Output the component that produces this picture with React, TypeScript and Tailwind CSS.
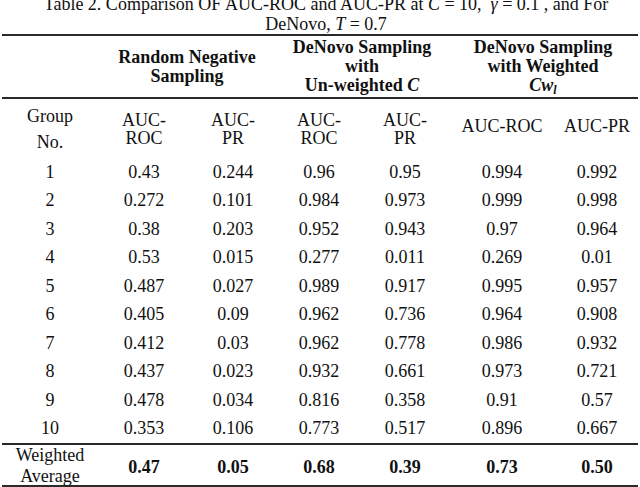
import React from "react";

const cols = "grid grid-cols-[96px_92px_86px_86px_86px_108px_82px]";

const data: string[][] = [
  ["1", "0.43", "0.244", "0.96", "0.95", "0.994", "0.992"],
  ["2", "0.272", "0.101", "0.984", "0.973", "0.999", "0.998"],
  ["3", "0.38", "0.203", "0.952", "0.943", "0.97", "0.964"],
  ["4", "0.53", "0.015", "0.277", "0.011", "0.269", "0.01"],
  ["5", "0.487", "0.027", "0.989", "0.917", "0.995", "0.957"],
  ["6", "0.405", "0.09", "0.962", "0.736", "0.964", "0.908"],
  ["7", "0.412", "0.03", "0.962", "0.778", "0.986", "0.932"],
  ["8", "0.437", "0.023", "0.932", "0.661", "0.973", "0.721"],
  ["9", "0.478", "0.034", "0.816", "0.358", "0.91", "0.57"],
  ["10", "0.353", "0.106", "0.773", "0.517", "0.896", "0.667"],
];

const avg = ["0.47", "0.05", "0.68", "0.39", "0.73", "0.50"];

function Rule() {
  return <div className="h-[2px] bg-[#2a2a2a]" />;
}

export default function App() {
  return (
    <div
      className="w-[640px] h-[487px] overflow-hidden bg-white text-[#111] text-[18px]"
      style={{ fontFamily: '"Liberation Serif", "Times New Roman", serif' }}
    >
      <div className="mt-[-6px] h-[40px] text-center leading-[20px] pl-[12px]">
        <div className="whitespace-nowrap">
          Table 2. Comparison OF AUC-ROC and AUC-PR at <i>C</i> = 10,&nbsp; <i>γ</i> = 0.1 , and For
        </div>
        <div className="whitespace-nowrap">
          DeNovo, <i>T</i> = 0.7
        </div>
      </div>
      <div className="mx-[2px]">
        <Rule />
        <div className="grid grid-cols-[96px_178px_172px_190px] h-[61px] items-center text-center font-bold leading-[19px]">
          <div />
          <div>
            <div>Random Negative</div>
            <div>Sampling</div>
          </div>
          <div>
            <div>DeNovo Sampling</div>
            <div>with</div>
            <div>
              Un-weighted <i>C</i>
            </div>
          </div>
          <div>
            <div>DeNovo Sampling</div>
            <div>with Weighted</div>
            <div>
              <i>Cw</i>
              <sub className="text-[12px] italic">l</sub>
            </div>
          </div>
        </div>
        <Rule />
        <div className={`${cols} h-[59px] items-center text-center`}>
          <div className="leading-[26px]">
            <div>Group</div>
            <div>No.</div>
          </div>
          <div className="leading-[18px]">
            <div>AUC-</div>
            <div>ROC</div>
          </div>
          <div className="leading-[18px]">
            <div>AUC-</div>
            <div>PR</div>
          </div>
          <div className="leading-[18px]">
            <div>AUC-</div>
            <div>ROC</div>
          </div>
          <div className="leading-[18px]">
            <div>AUC-</div>
            <div>PR</div>
          </div>
          <div className="pb-[4px]">AUC-ROC</div>
          <div className="pb-[4px]">AUC-PR</div>
        </div>
        {data.map((row) => (
          <div key={row[0]} className={`${cols} h-[28.5px] items-center text-center leading-[19px]`}>
            {row.map((c, i) => (
              <div key={i}>{c}</div>
            ))}
          </div>
        ))}
        <Rule />
        <div className={`${cols} h-[40px] items-center text-center`}>
          <div className="leading-[21px]">
            <div>Weighted</div>
            <div>Average</div>
          </div>
          {avg.map((v, i) => (
            <div key={i} className="font-bold pt-[2px]">
              {v}
            </div>
          ))}
        </div>
        <Rule />
      </div>
    </div>
  );
}
